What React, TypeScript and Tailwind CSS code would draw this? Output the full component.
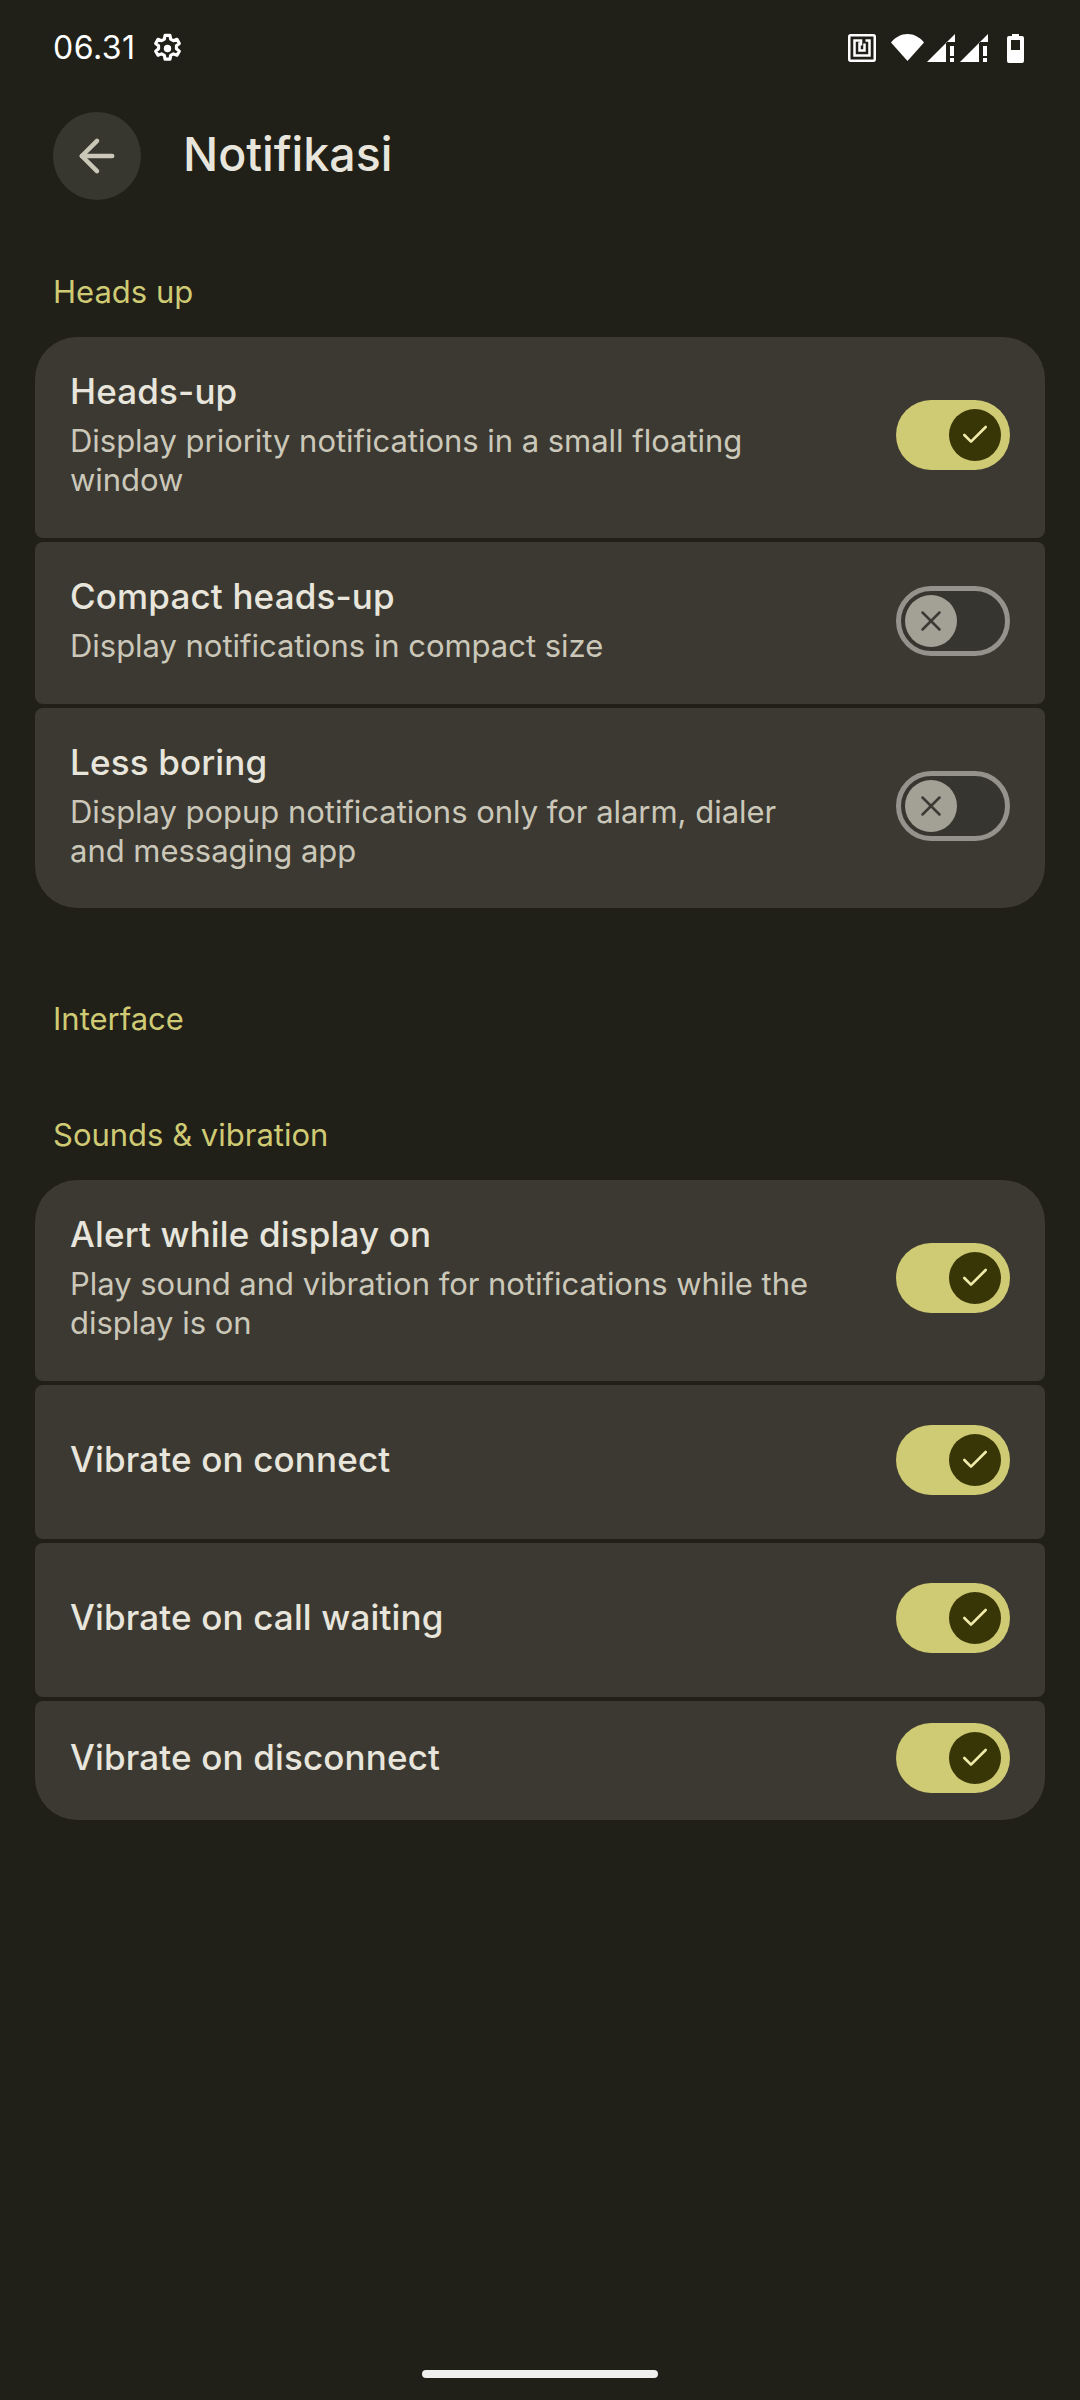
import React from "react";
import { ArrowLeft, Check, X } from "lucide-react";

const Signal = () => (
  <svg width="28" height="28" viewBox="0 0 28 28" fill="#fff">
    <path d="M0 28L28 0v8h-9v20z" />
    <rect x="23" y="12" width="4" height="10" />
    <rect x="23" y="24" width="4" height="4" />
  </svg>
);

const StatusIcons = () => (
  <div className="flex items-center">
    <svg width="28" height="28" viewBox="0 0 28 28" fill="none" stroke="#fff" strokeWidth="2.5">
      <rect x="1.250" y="1.250" width="25.500" height="25.500" rx="1.500" />
      <path d="M17.500 6.500h4v15h-15v-15H13v5" />
      <path d="M13 9.500h-1.500v7h5v-7" />
    </svg>
    <svg className="ml-[15px]" width="33" height="28" viewBox="0 0 33 28" fill="#fff">
      <path d="M0 8.500C4.500 3 10 0 16.500 0S28.500 3 33 8.500L16.500 27z" />
    </svg>
    <div className="ml-[3px]">
      <Signal />
    </div>
    <div className="ml-[5px]">
      <Signal />
    </div>
    <svg className="ml-[19px]" width="17" height="29" viewBox="0 0 17 29" fill="#fff">
      <path fillRule="evenodd" d="M5 0h7v2h3a2 2 0 0 1 2 2v23a2 2 0 0 1-2 2H2a2 2 0 0 1-2-2V4a2 2 0 0 1 2-2h3zM4 6v10h9V6z" />
    </svg>
  </div>
);

const Toggle = ({ on }: { on: boolean }) =>
  on ? (
    <div className="flex h-[70px] w-[114px] shrink-0 items-center justify-end rounded-full bg-[#cfca74] pr-[9px]">
      <div className="flex h-[52px] w-[52px] items-center justify-center rounded-full bg-[#383506]">
        <Check size={32} strokeWidth={2} className="text-[#f0ebaa]" />
      </div>
    </div>
  ) : (
    <div className="flex h-[70px] w-[114px] shrink-0 items-center rounded-full border-[5px] border-[#94928a] bg-[#37352f] pl-[4px]">
      <div className="flex h-[52px] w-[52px] items-center justify-center rounded-full bg-[#a3a196]">
        <X size={34} strokeWidth={1.8} className="text-[#3c3a34]" />
      </div>
    </div>
  );

type RowProps = {
  title: string;
  desc?: string[];
  on: boolean;
  className: string;
};

const Row = ({ title, desc, on, className }: RowProps) => (
  <div className={`flex items-center justify-between bg-[#3c3932] pb-[5px] pl-[35px] pr-[35px] ${className}`}>
    <div className="pb-[2px]">
      <div className="text-[35px] font-medium leading-[44px] tracking-[0.15px] text-[#e8e6dc]">{title}</div>
      <div className={desc ? "mt-[8px] text-[31px] leading-[39px] tracking-[-0.03px] text-[#cbc8ba]" : "hidden"}>
        {desc?.map((line) => (
          <div key={line}>{line}</div>
        ))}
      </div>
    </div>
    <Toggle on={on} />
  </div>
);

const Section = ({ children, className = "" }: { children: React.ReactNode; className?: string }) => (
  <div className={`pl-[53px] text-[31px] leading-[40px] text-[#cfca74] ${className}`}>{children}</div>
);

export default function App() {
  return (
    <div className="relative flex h-[2400px] w-[1080px] flex-col overflow-hidden bg-[#201f18] font-['Inter',sans-serif]">
      <div className="flex h-[96px] items-center justify-between pl-[53px] pr-[56px]">
        <div className="flex items-center gap-[15px]">
          <span className="text-[32px] tracking-[0.5px] text-white">06.31</span>
          <svg width="33" height="33" viewBox="0 0 24 24" fill="none" stroke="#fff" strokeWidth="2.300" strokeLinejoin="round">
            <path d="M10.200 2.500h3.600l0.500 2.700 2 1.100 2.600-1 1.700 3-2.100 1.700v2.200l2.100 1.700-1.700 3-2.600-1-2 1.100-0.500 2.700h-3.600l-0.500-2.700-2-1.100-2.600 1-1.700-3 2.100-1.700v-2.200l-2.100-1.700 1.700-3 2.600 1 2-1.100z" />
            <circle cx="12" cy="12" r="2.700" fill="#fff" stroke="none" />
          </svg>
        </div>
        <StatusIcons />
      </div>
      <div className="mt-[16px] flex items-center pl-[53px]">
        <div className="flex h-[88px] w-[88px] items-center justify-center rounded-full bg-[#37362f]">
          <ArrowLeft size={52} strokeWidth={2.100} className="text-[#cbc8ba]" />
        </div>
        <span className="ml-[42px] pb-[2px] text-[46.500px] font-medium text-[#e8e6dc]">Notifikasi</span>
      </div>
      <Section className="mt-[72px]">Heads up</Section>
      <div className="mx-[35px] mt-[25px] flex flex-col gap-[4px]">
        <Row
          title="Heads-up"
          desc={["Display priority notifications in a small floating", "window"]}
          on
          className="h-[201px] rounded-t-[42px] rounded-b-[8px]"
        />
        <Row
          title="Compact heads-up"
          desc={["Display notifications in compact size"]}
          on={false}
          className="h-[162px] rounded-[8px]"
        />
        <Row
          title="Less boring"
          desc={["Display popup notifications only for alarm, dialer", "and messaging app"]}
          on={false}
          className="h-[200px] rounded-t-[8px] rounded-b-[42px]"
        />
      </div>
      <Section className="mt-[91px]">Interface</Section>
      <Section className="mt-[76px]">Sounds &amp; vibration</Section>
      <div className="mx-[35px] mt-[25px] flex flex-col gap-[4px]">
        <Row
          title="Alert while display on"
          desc={["Play sound and vibration for notifications while the", "display is on"]}
          on
          className="h-[201px] rounded-t-[42px] rounded-b-[8px]"
        />
        <Row title="Vibrate on connect" on className="h-[154px] rounded-[8px]" />
        <Row title="Vibrate on call waiting" on className="h-[154px] rounded-[8px]" />
        <Row title="Vibrate on disconnect" on className="h-[119px] rounded-t-[8px] rounded-b-[42px]" />
      </div>
      <div className="absolute bottom-[22px] left-1/2 h-[8px] w-[236px] -translate-x-1/2 rounded-full bg-[#f0f0ee]" />
    </div>
  );
}
